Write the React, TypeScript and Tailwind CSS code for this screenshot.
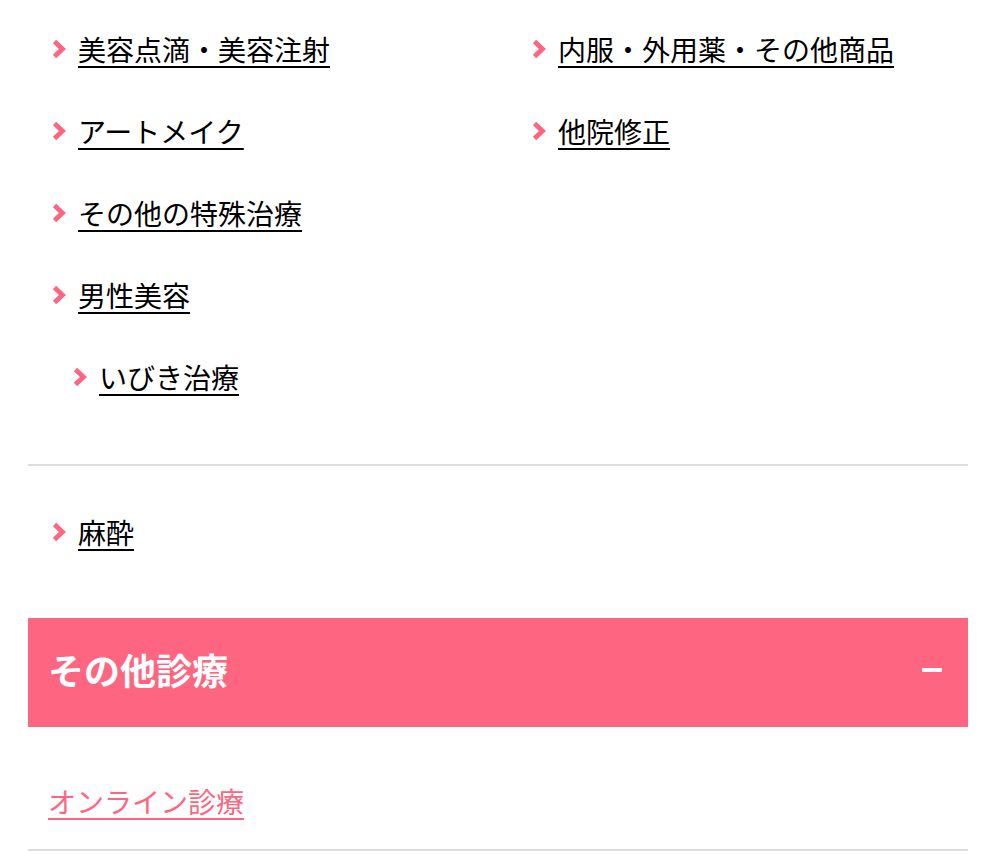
import React from "react";

const font = { fontFamily: '"Noto Sans CJK JP", "Noto Sans", sans-serif' };

function Chevron() {
  return (
    <svg width="14" height="20" viewBox="0 0 14 20" className="shrink-0">
      <polyline
        points="2.5,2.5 10.5,10 2.5,17.5"
        fill="none"
        stroke="#fd6580"
        strokeWidth="4.8"
        strokeLinejoin="miter"
      />
    </svg>
  );
}

function Item({ label, indent = false }: { label: string; indent?: boolean }) {
  return (
    <div className={`flex h-[82px] items-center gap-[12px] ${indent ? "pl-[21px]" : ""}`}>
      <Chevron />
      <a
        href="#"
        className="text-[28px] leading-none text-black underline decoration-2 underline-offset-[5px]"
      >
        {label}
      </a>
    </div>
  );
}

export default function App() {
  const left = ["美容点滴・美容注射", "アートメイク", "その他の特殊治療", "男性美容"];
  const right = ["内服・外用薬・その他商品", "他院修正"];

  return (
    <div className="min-h-[866px] w-[996px] bg-white px-[28px]" style={font}>
      <div className="grid grid-cols-[480px_1fr] pl-[24px] pt-[8px]">
        <div className="flex flex-col">
          {left.map((l) => (
            <Item key={l} label={l} />
          ))}
          <Item label="いびき治療" indent />
        </div>
        <div className="flex flex-col">
          {right.map((l) => (
            <Item key={l} label={l} />
          ))}
        </div>
      </div>

      <div className="mt-[46px] h-[2px] bg-[#dddddd]" />

      <div className="pl-[24px] pt-[25px]">
        <Item label="麻酔" />
      </div>

      <div className="mt-[45px] flex h-[109px] items-center justify-between bg-[#fd6580] pb-[5px] pl-[20px] pr-[26px]">
        <span className="pb-[2px] text-[36px] font-bold leading-none text-white">その他診療</span>
        <span className="block h-[4px] w-[20px] bg-white" />
      </div>

      <div className="flex h-[122px] items-center pl-[20px] pt-[25px]">
        <a
          href="#"
          className="text-[28px] leading-none text-[#fd6580] underline decoration-2 underline-offset-[5px]"
        >
          オンライン診療
        </a>
      </div>
      <div className="h-[2px] bg-[#dddddd]" />
    </div>
  );
}
